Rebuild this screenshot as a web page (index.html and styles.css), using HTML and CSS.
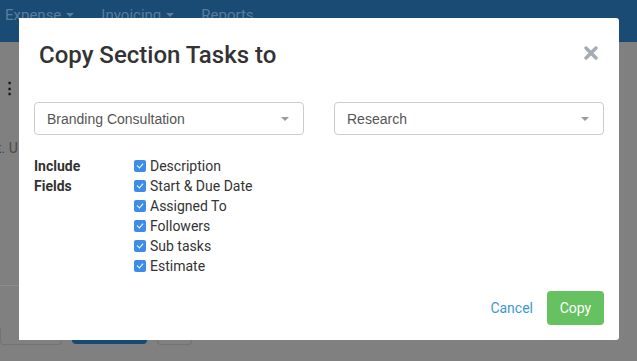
FILE: index.html
```html
<!DOCTYPE html>
<html lang="en">
<head>
  <meta charset="UTF-8" />
  <title>Copy Section Tasks</title>
  <link rel="stylesheet" href="styles.css">
</head>
<body>

  <div class="topnav">
    <span class="nav-item">Expense <span class="caret-sm"></span></span>
    <span class="nav-item">Invoicing <span class="caret-sm"></span></span>
    <span class="nav-item">Reports</span>
  </div>

  <div class="backdrop">
    <div class="bg-dots">&#8942;</div>
    <div class="bg-text">t. U</div>
    <div class="bg-line"></div>
    <div class="bg-buttons">
      <span class="bg-btn bg-btn-a"></span>
      <span class="bg-btn bg-btn-primary"></span>
      <span class="bg-btn bg-btn-b"></span>
    </div>
  </div>

  <div class="modal">
    <div class="modal-header">
      <h2>Copy Section Tasks to</h2>
      <svg class="close" width="14" height="14" viewBox="0 0 14 14">
        <path d="M2 2 L12 12 M12 2 L2 12" stroke="#a3abb3" stroke-width="3.4" stroke-linecap="round" fill="none"/>
      </svg>
    </div>

    <div class="modal-body">
      <div class="select-row">
        <div class="select">
          <span>Branding Consultation</span>
          <span class="caret"></span>
        </div>
        <div class="select">
          <span>Research</span>
          <span class="caret"></span>
        </div>
      </div>

      <div class="fields">
        <div class="fields-label">Include<br>Fields</div>
        <ul class="check-list">
          <li><span class="check"></span>Description</li>
          <li><span class="check"></span>Start &amp; Due Date</li>
          <li><span class="check"></span>Assigned To</li>
          <li><span class="check"></span>Followers</li>
          <li><span class="check"></span>Sub tasks</li>
          <li><span class="check"></span>Estimate</li>
        </ul>
      </div>
    </div>

    <div class="modal-footer">
      <a class="btn-link" href="#">Cancel</a>
      <button class="btn-copy">Copy</button>
    </div>
  </div>

</body>
</html>
```

FILE: styles.css
```css
html, body { margin: 0; height: 100%; }
body { font-family: Roboto, "Liberation Sans", sans-serif; background: #808080; overflow: hidden; position: relative; }

.topnav { height: 42px; background: #1a4b74; display: flex; gap: 27px; padding: 0 0 0 5px; }
.nav-item { color: #5a7c9d; font-size: 15px; line-height: 30px; height: 30px; display: flex; align-items: center; gap: 5px; }
.caret-sm { width: 0; height: 0; border-left: 4px solid transparent; border-right: 4px solid transparent; border-top: 4px solid #5a7c9d; }

.backdrop { position: relative; height: 319px; }
.bg-dots { position: absolute; left: 2px; top: 38px; font-size: 15px; font-weight: bold; color: #111; line-height: 16px; }
.bg-text { position: absolute; left: -3px; top: 98px; font-size: 14px; color: #4a4a4a; }
.bg-line { position: absolute; left: 0; top: 243px; width: 30px; height: 1px; background: #8c8c8c; }
.bg-buttons { position: absolute; left: 0; top: 286px; display: flex; gap: 10px; }
.bg-btn { display: block; height: 16px; border-radius: 0 0 4px 4px; }
.bg-btn-a { width: 60px; border: 1px solid #737373; border-top: none; }
.bg-btn-primary { width: 75px; background: #174a72; }
.bg-btn-b { width: 33px; border: 1px solid #737373; border-top: none; }

.modal { position: absolute; left: 19px; top: 18px; width: 600px; height: 322px; background: #fff; border-radius: 0 3px 3px 0; box-sizing: border-box; display: flex; flex-direction: column; }

.modal-header { display: flex; justify-content: space-between; align-items: center; padding: 21px 21px 0 20px; height: 32px; }
.modal-header h2 { margin: 0; font-size: 24px; font-weight: 500; color: #333; }
.close { margin-top: -4px; }

.modal-body { padding: 0 15px; }
.select-row { display: flex; gap: 30px; margin-top: 31px; }
.select { flex: 1; height: 33px; box-sizing: border-box; border: 1px solid #ccc; border-radius: 4px; display: flex; align-items: center; justify-content: space-between; padding: 0 12px; font-family: "Liberation Sans", Arial, sans-serif; font-size: 14px; color: #555; }
.caret { width: 0; height: 0; border-left: 4px solid transparent; border-right: 4px solid transparent; border-top: 4px solid #999; margin-right: 2px; }

.fields { display: flex; margin-top: 21px; font-size: 14px; color: #333; }
.fields-label { width: 100px; font-weight: bold; line-height: 20px; }
.check-list { list-style: none; margin: 0; padding: 0; line-height: 20px; }
.check-list li { display: flex; align-items: center; }
.check { width: 12px; height: 12px; background: #3d8de8; border-radius: 2px; margin-right: 4px; position: relative; }
.check::after { content: ""; position: absolute; left: 4px; top: 2px; width: 3px; height: 5px; border: solid #fff; border-width: 0 1.5px 1.5px 0; transform: rotate(40deg); }

.modal-footer { margin-top: auto; display: flex; justify-content: flex-end; align-items: center; gap: 14px; padding: 0 15px 15px 0; }
.btn-link { color: #3d97d3; text-decoration: none; font-size: 14px; }
.btn-copy { font-family: Roboto, sans-serif; font-size: 14px; color: #fff; background: #66c160; border: none; border-radius: 4px; width: 57px; height: 34px; }
```
